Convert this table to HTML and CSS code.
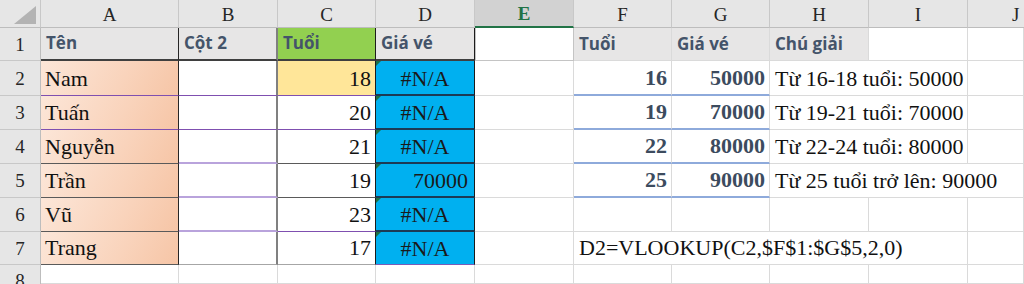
FILE: index.html
```html
<!DOCTYPE html>
<html lang="vi">
<head>
<meta charset="utf-8">
<link rel="stylesheet" href="styles.css">
</head>
<body>
<div class="sheet">
  <!-- column headers -->
  <div class="ch corner"><svg class="corner-tri" width="22" height="18" viewBox="0 0 22 18"><polygon points="22,0 22,18 0,18" fill="#b3b3b3"/></svg></div>
  <div class="ch">A</div>
  <div class="ch">B</div>
  <div class="ch">C</div>
  <div class="ch">D</div>
  <div class="ch ch-sel">E</div>
  <div class="ch">F</div>
  <div class="ch">G</div>
  <div class="ch">H</div>
  <div class="ch">I</div>
  <div class="ch ch-j">J</div>

  <!-- row 1 -->
  <div class="rh">1</div>
  <div class="c hd colA r1b">Tên</div>
  <div class="c hd colB r1b">Cột 2</div>
  <div class="c hd green colC r1b">Tuổi</div>
  <div class="c hd colD r1b">Giá vé</div>
  <div class="c sel"></div>
  <div class="c hd">Tuổi</div>
  <div class="c hd">Giá vé</div>
  <div class="c hd">Chú giải</div>
  <div class="c"></div>
  <div class="c"></div>

  <!-- row 2 -->
  <div class="rh">2</div>
  <div class="c name colA bp">Nam</div>
  <div class="c colB bp"></div>
  <div class="c num yellow colC bp">18</div>
  <div class="c err colD">#N/A</div>
  <div class="c"></div>
  <div class="c bnum bb">16</div>
  <div class="c bnum bb">50000</div>
  <div class="c txt span2">Từ 16-18 tuổi: 50000</div>
  <div class="c"></div>

  <!-- row 3 -->
  <div class="rh">3</div>
  <div class="c name colA bp">Tuấn</div>
  <div class="c colB bp"></div>
  <div class="c num colC bp">20</div>
  <div class="c err colD">#N/A</div>
  <div class="c"></div>
  <div class="c bnum bb">19</div>
  <div class="c bnum bb">70000</div>
  <div class="c txt span2">Từ 19-21 tuổi: 70000</div>
  <div class="c"></div>

  <!-- row 4 -->
  <div class="rh">4</div>
  <div class="c name colA bd">Nguyễn</div>
  <div class="c colB bl"></div>
  <div class="c num colC bd">21</div>
  <div class="c err colD">#N/A</div>
  <div class="c"></div>
  <div class="c bnum bb">22</div>
  <div class="c bnum bb">80000</div>
  <div class="c txt span2">Từ 22-24 tuổi: 80000</div>
  <div class="c"></div>

  <!-- row 5 -->
  <div class="rh">5</div>
  <div class="c name colA bd">Trần</div>
  <div class="c colB bl"></div>
  <div class="c num colC bd">19</div>
  <div class="c errnum colD">70000</div>
  <div class="c"></div>
  <div class="c bnum bb">25</div>
  <div class="c bnum bb">90000</div>
  <div class="c txt span3">Từ 25 tuổi trở lên: 90000</div>

  <!-- row 6 -->
  <div class="rh">6</div>
  <div class="c name colA bd">Vũ</div>
  <div class="c colB bl"></div>
  <div class="c num colC bp">23</div>
  <div class="c err colD">#N/A</div>
  <div class="c"></div>
  <div class="c"></div>
  <div class="c"></div>
  <div class="c"></div>
  <div class="c"></div>
  <div class="c"></div>

  <!-- row 7 -->
  <div class="rh">7</div>
  <div class="c name colA bd">Trang</div>
  <div class="c colB bg"></div>
  <div class="c num colC bg">17</div>
  <div class="c err colD last">#N/A</div>
  <div class="c"></div>
  <div class="c txt span4">D2=VLOOKUP(C2,$F$1:$G$5,2,0)</div>
  <div class="c"></div>

  <!-- row 8 -->
  <div class="rh rh-last">8</div>
  <div class="c"></div>
  <div class="c"></div>
  <div class="c"></div>
  <div class="c"></div>
  <div class="c"></div>
  <div class="c"></div>
  <div class="c"></div>
  <div class="c"></div>
  <div class="c"></div>
  <div class="c"></div>
</div>
</body>
</html>
```

FILE: styles.css
```css
* { box-sizing: border-box; }

html, body {
  margin: 0;
  padding: 0;
  background: #ffffff;
  width: 1024px;
  height: 284px;
  overflow: hidden;
}

.sheet {
  display: grid;
  grid-template-columns: 41px 138px 99px 98px 99px 99px 98px 98px 99px 99px 56px;
  grid-template-rows: 28px 33px 35px 34px 34px 34px 34px 33px 19px;
  font-family: "Liberation Serif", "Times New Roman", serif;
  color: #111;
  overflow: hidden;
}

/* column headers */
.ch {
  background: #e6e6e6;
  border-right: 1px solid #c8c8c8;
  border-bottom: 1px solid #bdbdbd;
  display: flex;
  align-items: center;
  justify-content: center;
  font-size: 19px;
  color: #262626;
  padding-top: 2px;
  overflow: hidden;
}
.ch-j {
  justify-content: flex-start;
  padding-left: 44px;
  border-right: none;
}
.corner {
  justify-content: flex-end;
  align-items: flex-end;
  padding: 0 4px 3px 0;
}
.corner-tri { display: block; }
.ch-sel {
  background: #d2d2d2;
  color: #217346;
  font-weight: bold;
  border-bottom: 2px solid #217346;
}

/* row headers */
.rh {
  background: #e6e6e6;
  border-right: 1px solid #bdbdbd;
  border-bottom: 1px solid #c8c8c8;
  display: flex;
  align-items: center;
  justify-content: center;
  font-size: 19px;
  line-height: 22px;
  color: #262626;
  padding-top: 1px;
  overflow: hidden;
}
.rh-last {
  align-items: flex-start;
  padding-top: 5px;
  border-bottom: none;
}

/* cells */
.c {
  position: relative;
  border-right: 1px solid #dadada;
  border-bottom: 1px solid #dadada;
  display: flex;
  align-items: flex-end;
  padding: 0 4px 4px 4px;
  font-size: 22px;
  line-height: 25px;
  white-space: nowrap;
  overflow: hidden;
}

.hd {
  background: #e7e6e6;
  font-family: "Open Sans", "Liberation Sans", sans-serif;
  font-weight: 700;
  font-size: 17px;
  line-height: 22px;
  color: #44546a;
  padding: 0 5px 5px 5px;
}
.green { background: #92d050; }
.sel {
  border: 1px solid #c4c4c4;
  border-top: none;
  background: #fff;
}

.name {
  background: linear-gradient(120deg, #fce6d8 0%, #f9d3bb 60%, #f6c5a6 100%);
}
.num { justify-content: flex-end; }
.yellow { background: #ffe699; }
.bnum {
  justify-content: flex-end;
  font-weight: bold;
  color: #3c4b5e;
}
.txt { padding-left: 5px; }
.span2 { grid-column: span 2; }
.span3 { grid-column: span 3; }
.span4 { grid-column: span 4; }

/* D column error cells */
.err, .errnum {
  background: #00b0f0;
  border-right: 1px solid #1c1c1c;
  border-bottom: 2px solid #1c3a55;
  color: #1a1a1a;
  padding-bottom: 3px;
}
.err { justify-content: center; }
.errnum { justify-content: flex-end; padding-right: 6px; }
.err::before, .errnum::before {
  content: "";
  position: absolute;
  left: 0;
  top: 0;
  border-top: 5px solid #1e7145;
  border-right: 5px solid transparent;
}
.err.last { border-bottom: 1px solid #7a5cb8; }

/* column borders */
.colA { border-right: 1px solid #262626; }
.colB { border-right: 2px solid #808080; }
.colC { border-right: 1px solid #1c1c1c; }
.colD { border-right: 1px solid #1c1c1c; }

/* row bottom borders */
.r1b { border-bottom: 2px solid #3f3f3f; }
.bp { border-bottom: 1px solid #7f4fb0; }
.bl { border-bottom: 2px solid #b9a3dc; }
.bd { border-bottom: 1px solid #5a5a5a; }
.bg { border-bottom: 1px solid #a6a6a6; }
.bb { border-bottom: 2px solid #8eaadb; }
```
